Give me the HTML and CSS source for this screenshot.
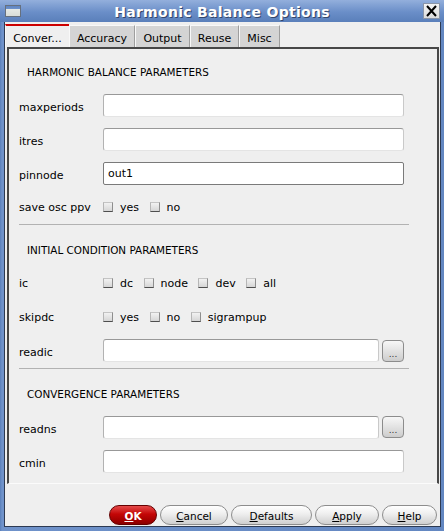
FILE: index.html
```html
<!DOCTYPE html>
<html>
<head>
<meta charset="utf-8">
<link rel="stylesheet" href="styles.css">
</head>
<body>
<div class="window">
  <div class="titlebar">
    <div class="ticon"></div>
    <div class="ttitle">Harmonic Balance Options</div>
    <div class="tclose">
      <svg width="15" height="14" viewBox="0 0 15 14"><path d="M3 2 L12 12 M12 2 L3 12" stroke="#000" stroke-width="2" fill="none"/></svg>
    </div>
  </div>
  <div class="frame">
    <div class="client">
      <div class="tabs">
        <div class="tab sel">Conver...</div>
        <div class="tab t-acc">Accuracy</div>
        <div class="tab t-out">Output</div>
        <div class="tab t-reu">Reuse</div>
        <div class="tab t-misc">Misc</div>
      </div>
      <div class="panel">
        <div class="hdr first">HARMONIC BALANCE PARAMETERS</div>
        <div class="row"><span class="lbl flbl">maxperiods</span><div class="field"></div></div>
        <div class="row"><span class="lbl flbl">itres</span><div class="field"></div></div>
        <div class="row"><span class="lbl flbl">pinnode</span><div class="field focus">out1</div></div>
        <div class="row"><span class="lbl">save osc ppv</span>
          <span class="opt"><span class="cb"></span>yes</span>
          <span class="opt"><span class="cb"></span>no</span>
        </div>
        <div class="sep"></div>
        <div class="hdr">INITIAL CONDITION PARAMETERS</div>
        <div class="row"><span class="lbl">ic</span>
          <span class="opt"><span class="cb"></span>dc</span>
          <span class="opt"><span class="cb"></span>node</span>
          <span class="opt"><span class="cb"></span>dev</span>
          <span class="opt"><span class="cb"></span>all</span>
        </div>
        <div class="row"><span class="lbl">skipdc</span>
          <span class="opt"><span class="cb"></span>yes</span>
          <span class="opt"><span class="cb"></span>no</span>
          <span class="opt"><span class="cb"></span>sigrampup</span>
        </div>
        <div class="row r33"><span class="lbl flbl">readic</span><div class="field short"></div><div class="dots">...</div></div>
        <div class="sep mt1"></div>
        <div class="hdr">CONVERGENCE PARAMETERS</div>
        <div class="row"><span class="lbl flbl">readns</span><div class="field short"></div><div class="dots">...</div></div>
        <div class="row"><span class="lbl flbl">cmin</span><div class="field"></div></div>
      </div>
      <div class="btnbar">
        <div class="btn ok"><span><u>O</u>K</span></div>
        <div class="btn cancel"><span><u>C</u>ancel</span></div>
        <div class="btn defaults"><span><u>D</u>efaults</span></div>
        <div class="btn apply"><span><u>A</u>pply</span></div>
        <div class="btn help"><span><u>H</u>elp</span></div>
      </div>
    </div>
  </div>
</div>
</body>
</html>
```

FILE: styles.css
```css
html, body {
  margin: 0;
  padding: 0;
}
body {
  width: 444px;
  height: 531px;
  overflow: hidden;
  font-family: "DejaVu Sans", "Noto Sans", sans-serif;
  color: #000;
}
.window {
  width: 444px;
  height: 531px;
  display: flex;
  flex-direction: column;
  background: #6387c1;
}
.titlebar {
  height: 22px;
  flex: none;
  display: flex;
  align-items: center;
  background: linear-gradient(#93afdc, #6a8ec8 55%, #5a7fba);
}
.ticon {
  box-sizing: border-box;
  width: 16px;
  height: 12px;
  margin-left: 5px;
  border: 1px solid #66707e;
  background: linear-gradient(#5f84c0 0, #6f93cc 3px, #e6eae6 3px, #d8ddd8);
}
.ttitle {
  flex: 1;
  text-align: center;
  color: #fff;
  font-weight: bold;
  font-size: 14px;
  letter-spacing: 0.3px;
  padding-top: 1px;
  text-shadow: 1px 1px 0 #34466a;
}
.tclose {
  box-sizing: border-box;
  width: 17px;
  height: 16px;
  margin-right: 4px;
  border: 1px solid #8a95a8;
  background: linear-gradient(#f4f4f4, #dcdcdc);
  display: flex;
  align-items: center;
  justify-content: center;
}
.frame {
  flex: 1;
  display: flex;
  padding: 0 3px 4px 4px;
  background: linear-gradient(90deg, #5a7fba, #6f92ca 2px, #6387c1);
}
.client {
  flex: 1;
  display: flex;
  flex-direction: column;
  background: #efefef;
  border: 1px solid #2d3a52;
  border-top: none;
}
.tabs {
  height: 23px;
  margin-top: 2px;
  display: flex;
  align-items: flex-end;
  flex: none;
}
.tab {
  box-sizing: border-box;
  height: 22px;
  padding: 4px 0 0 0;
  font-size: 11px;
  background: #d4d4d4;
  border-top: 1px solid #f8f8f8;
  border-left: 1px solid #f8f8f8;
  border-right: 1px solid #9e9e9e;
  display: flex;
  align-items: center;
  justify-content: center;
  white-space: nowrap;
}
.t-acc { width: 66px; }
.t-out { width: 55px; }
.t-reu { width: 49px; }
.t-misc { width: 41px; }
.tab.sel {
  width: 64px;
  height: 23px;
  padding: 3px 0 0 0;
  background: #efefef;
  border-top: 2px solid #cc0000;
  border-left: 1px solid #fafafa;
  border-right: none;
}
.panel {
  flex: 1;
  margin: 0 1px 0 2px;
  border: 2px solid #474747;
  border-bottom: 1px solid #fbfbfb;
  display: flex;
  flex-direction: column;
}
.hdr {
  height: 24px;
  line-height: 24px;
  padding-left: 18px;
  margin-top: 13px;
  margin-bottom: 4px;
  font-size: 10.4px;
  white-space: nowrap;
}
.hdr.first {
  margin-top: 11px;
}
.row {
  height: 34px;
  flex: none;
  display: flex;
  align-items: center;
  padding-left: 10px;
  font-size: 11px;
}
.row.r33 {
  height: 33px;
}
.lbl {
  width: 84px;
  flex: none;
  white-space: nowrap;
}
.flbl {
  padding-top: 4px;
}
.field {
  box-sizing: border-box;
  width: 301px;
  height: 23px;
  flex: none;
  background: #fff;
  border: 1px solid;
  border-color: #989898 #c9c9c9 #e4e4e4 #b2b2b2;
  border-radius: 3px;
  font-size: 11px;
  padding-left: 4px;
  display: flex;
  align-items: center;
}
.field.focus {
  border-color: #7a7a7a;
  border-radius: 2px;
}
.field.short {
  width: 276px;
}
.dots {
  box-sizing: border-box;
  width: 22px;
  height: 22px;
  margin-left: 3px;
  flex: none;
  border: 1px solid #8c8c8c;
  border-radius: 4px;
  background: linear-gradient(#f7f7f7, #e2e2e2 50%, #cdcdcd);
  font-size: 9px;
  color: #333;
  display: flex;
  align-items: center;
  justify-content: center;
  padding-top: 6px;
}
.opt {
  display: flex;
  align-items: center;
  gap: 7px;
  margin-right: 10.5px;
  white-space: nowrap;
}
.cb {
  box-sizing: border-box;
  width: 10px;
  height: 10px;
  flex: none;
  background: linear-gradient(#f2f2f2, #d6d6d6);
  border-top: 1px solid #c4c4c4;
  border-left: 1px solid #b6b6b6;
  border-right: 1px solid #8e8e8e;
  border-bottom: 1px solid #4e4e4e;
}
.sep {
  height: 1px;
  width: 390px;
  margin-left: 10px;
  background: #b2b2b2;
  flex: none;
}
.sep.mt1 {
  margin-top: 1px;
}
.btnbar {
  height: 42px;
  flex: none;
  box-sizing: border-box;
  padding: 21px 3px 0 0;
  display: flex;
  justify-content: flex-end;
  align-items: flex-start;
  gap: 3px;
}
.btn {
  box-sizing: border-box;
  height: 20px;
  border: 1px solid #8d8d8d;
  border-radius: 10px;
  background: linear-gradient(#ffffff, #eeeeee 45%, #dadada 80%, #cfcfcf);
  font-size: 10.5px;
  display: flex;
  align-items: center;
  justify-content: center;
  padding-top: 2px;
}
.btn u {
  text-decoration: underline;
}
.ok {
  width: 48px;
  background: linear-gradient(#e44a4a, #c40606 45%, #a20000 80%, #8a0000);
  border-color: #650000;
  color: #fff;
  font-weight: bold;
}
.cancel { width: 68px; }
.defaults { width: 81px; }
.apply { width: 64px; }
.help { width: 55px; }
```
